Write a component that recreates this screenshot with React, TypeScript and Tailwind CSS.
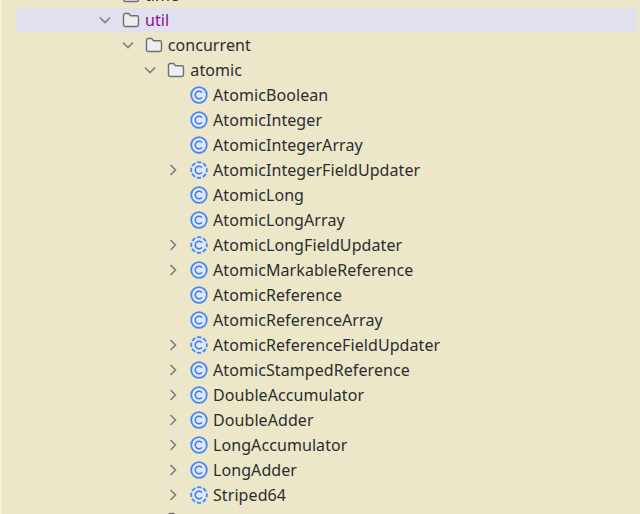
import React from "react";

type Kind = "folder" | "class" | "abstract";

interface TreeRow {
  label: string;
  depth: number;
  kind: Kind;
  chevron?: "open" | "closed";
  selected?: boolean;
}

const rows: TreeRow[] = [
  { label: "time", depth: 0, kind: "folder" },
  { label: "util", depth: 0, kind: "folder", chevron: "open", selected: true },
  { label: "concurrent", depth: 1, kind: "folder", chevron: "open" },
  { label: "atomic", depth: 2, kind: "folder", chevron: "open" },
  { label: "AtomicBoolean", depth: 3, kind: "class" },
  { label: "AtomicInteger", depth: 3, kind: "class" },
  { label: "AtomicIntegerArray", depth: 3, kind: "class" },
  { label: "AtomicIntegerFieldUpdater", depth: 3, kind: "abstract", chevron: "closed" },
  { label: "AtomicLong", depth: 3, kind: "class" },
  { label: "AtomicLongArray", depth: 3, kind: "class" },
  { label: "AtomicLongFieldUpdater", depth: 3, kind: "abstract", chevron: "closed" },
  { label: "AtomicMarkableReference", depth: 3, kind: "class", chevron: "closed" },
  { label: "AtomicReference", depth: 3, kind: "class" },
  { label: "AtomicReferenceArray", depth: 3, kind: "class" },
  { label: "AtomicReferenceFieldUpdater", depth: 3, kind: "abstract", chevron: "closed" },
  { label: "AtomicStampedReference", depth: 3, kind: "class", chevron: "closed" },
  { label: "DoubleAccumulator", depth: 3, kind: "class", chevron: "closed" },
  { label: "DoubleAdder", depth: 3, kind: "class", chevron: "closed" },
  { label: "LongAccumulator", depth: 3, kind: "class", chevron: "closed" },
  { label: "LongAdder", depth: 3, kind: "class", chevron: "closed" },
  { label: "Striped64", depth: 3, kind: "abstract", chevron: "closed" },
  { label: "locks", depth: 2, kind: "folder" },
];

const Chevron = ({ dir }: { dir: "open" | "closed" }) => (
  <svg width="18" height="18" viewBox="0 0 18 18" fill="none" stroke="#7f7f80" strokeWidth="1.6">
    {dir === "open" ? <path d="M4 6.5l5 5 5-5" /> : <path d="M6.5 4l5 5-5 5" />}
  </svg>
);

const FolderIcon = () => (
  <svg width="18" height="18" viewBox="0 0 18 18" fill="#eeeef0" stroke="#6e6f73" strokeWidth="1.4">
    <path d="M1.5 4.2a1.7 1.7 0 0 1 1.7-1.7h3.4l2 2.2h6.2a1.7 1.7 0 0 1 1.7 1.7v7.4a1.7 1.7 0 0 1-1.7 1.7H3.2a1.7 1.7 0 0 1-1.7-1.7z" />
  </svg>
);

const ClassIcon = ({ dashed }: { dashed: boolean }) => (
  <svg width="18" height="18" viewBox="0 0 18 18" fill="none">
    <circle
      cx="9"
      cy="9"
      r="7.8"
      fill="#dfe8fb"
      stroke="#4a86f0"
      strokeWidth="1.8"
      strokeDasharray={dashed ? "4.4 1.73" : undefined}
      strokeDashoffset={dashed ? "2.2" : undefined}
    />
    <path d="M12 6.6a3.8 3.8 0 1 0 0 4.8" stroke="#3b78e8" strokeWidth="1.5" />
  </svg>
);

const Row = ({ row }: { row: TreeRow }) => (
  <div
    className="flex h-[25px] items-end"
    style={{ paddingLeft: 0 }}
  >
    <div
      className={`flex h-[24px] grow items-center rounded-[5px] ${row.selected ? "bg-[#e0e0ee]" : ""}`}
      style={{ paddingLeft: 80 + row.depth * 22.67 }}
    >
      <div className="flex w-[18px] shrink-0 justify-center">
        {row.chevron && <Chevron dir={row.chevron} />}
      </div>
      <div className="ml-[8px] shrink-0">
        {row.kind === "folder" ? <FolderIcon /> : <ClassIcon dashed={row.kind === "abstract"} />}
      </div>
      <span className={`ml-[5px] whitespace-nowrap text-[16px] tracking-[0.08px] ${row.selected ? "text-[#871094]" : "text-[#2b2d30]"}`}>
        {row.label}
      </span>
    </div>
  </div>
);

export default function App() {
  return (
    <div className="h-[514px] w-[640px] overflow-hidden border-l border-l-[#f6f3e0] bg-[#ece7c8] font-['Noto_Sans',sans-serif]">
      <div className="-mt-[18px] ml-[15px] mr-[3px]">
        {rows.map((row) => (
          <Row key={row.label} row={row} />
        ))}
      </div>
    </div>
  );
}
